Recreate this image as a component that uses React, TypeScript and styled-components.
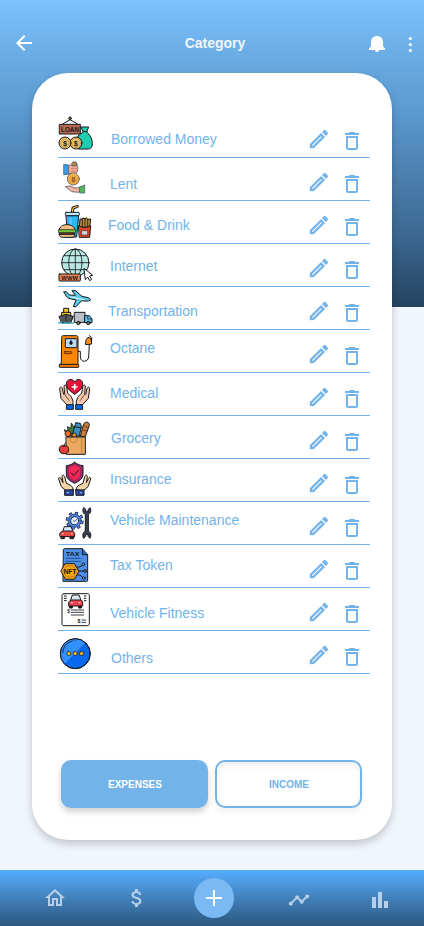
import React from 'react';
import styled, { createGlobalStyle } from 'styled-components';

const BLUE = '#72b3ea';
const INK = '#16181d';

const GlobalStyle = createGlobalStyle`
  * { box-sizing: border-box; }
  body {
    margin: 0;
    background: #f1f6fb;
    font-family: 'Liberation Sans', Arial, sans-serif;
  }
`;

const Screen = styled.div`
  width: 424px;
  height: 926px;
  display: flex;
  flex-direction: column;
  overflow: hidden;
  background: linear-gradient(180deg, #7cc2ff 0px, #69aae2 60px, #5b98cd 115px, #3c6892 235px, #25435f 307px) 0 0 / 100% 307px no-repeat, #f1f6fb;
`;

const Header = styled.header`
  height: 73px;
  padding: 31px 8px 0 12px;
  display: grid;
  grid-template-columns: 80px 1fr 50px;
  align-items: start;
  color: #fff;
`;

const Title = styled.h1`
  margin: 4px 28px 0 0;
  font-size: 14px;
  line-height: 16px;
  font-weight: 700;
  color: #f1f6fb;
  text-align: center;
`;

const HeaderActions = styled.div`
  display: flex;
  justify-content: space-between;
  padding: 4px 0 0 2px;
`;

const Card = styled.main`
  width: 360px;
  height: 767px;
  margin: 0 auto;
  padding: 42px 22px 32px 26px;
  display: flex;
  flex-direction: column;
  background: #fff;
  border-radius: 36px;
  box-shadow: 0 4px 8px rgba(0, 0, 0, 0.2);
`;

const List = styled.ul`
  margin: 0;
  padding: 0;
  list-style: none;
`;

const Row = styled.li`
  height: 43px;
  display: grid;
  grid-template-columns: 36px 1fr 24px 24px;
  column-gap: 9px;
  padding-right: 6px;
  border-bottom: 1px solid ${BLUE};
  color: ${BLUE};
`;

const Label = styled.span<{ $x: number; $mid: number }>`
  padding-top: ${(p) => p.$mid - 8}px;
  padding-left: ${(p) => p.$x - 103}px;
  font-size: 14px;
  line-height: 16px;
  white-space: nowrap;
`;

const IconButton = styled.button<{ $top?: number }>`
  width: 24px;
  height: 24px;
  margin: ${(p) => p.$top ?? 0}px 0 0;
  padding: 0;
  border: 0;
  background: none;
  color: inherit;
  display: flex;
  align-items: center;
  justify-content: center;
`;

const Tabs = styled.div`
  display: grid;
  grid-template-columns: 147px 147px;
  gap: 7px;
  margin: auto 0 0 3px;
`;

const Tab = styled.button<{ $active?: boolean }>`
  height: 48px;
  padding: 0 0 0 1px;
  border: 2px solid ${BLUE};
  border-radius: 10px;
  background: ${(p) => (p.$active ? BLUE : 'transparent')};
  color: ${(p) => (p.$active ? '#fff' : BLUE)};
  font: 700 10px 'Liberation Sans', Arial, sans-serif;
  box-shadow: ${(p) =>
    p.$active
      ? '0 4px 6px rgba(0, 0, 0, 0.18)'
      : '0 4px 6px rgba(0, 0, 0, 0.06), inset 0 4px 6px rgba(0, 0, 0, 0.06)'};
`;

const Nav = styled.nav`
  height: 56px;
  margin-top: auto;
  display: flex;
  align-items: center;
  background: linear-gradient(180deg, #55aeff 0%, #417fb8 52%, #2b5780 100%);
  color: #b5d0e8;
`;

const NavItem = styled.button<{ $gap: number; $drop?: number }>`
  width: 24px;
  height: 24px;
  padding: 0;
  border: 0;
  background: none;
  color: inherit;
  display: flex;
  align-items: center;
  justify-content: center;
  margin-left: ${(p) => p.$gap}px;
  margin-top: ${(p) => (p.$drop ?? 0) * 2}px;
`;

const AddButton = styled(NavItem)`
  width: 40px;
  height: 40px;
  border-radius: 50%;
  background: #7ab9f2;
  color: #fff;
`;

const Glyph = ({ d, size = 24, weight = 0 }: { d: string; size?: number; weight?: number }) => (
  <svg width={size} height={size} viewBox="0 0 24 24" fill="currentColor" stroke={weight ? 'currentColor' : 'none'} strokeWidth={weight} style={{ flex: 'none' }} aria-hidden>
    <path d={d} />
  </svg>
);

const PATHS = {
  back: 'M20 11H7.83l5.59-5.59L12 4l-8 8 8 8 1.41-1.41L7.83 13H20v-2z',
  edit: 'M14.06 9.02l.92.92L5.92 19H5v-.92l9.06-9.06M17.66 3c-.25 0-.51.1-.7.29l-1.83 1.83 3.75 3.75 1.83-1.83c.39-.39.39-1.02 0-1.41l-2.34-2.34c-.2-.2-.45-.29-.71-.29zm-3.6 3.19L3 17.25V21h3.75L17.81 9.94l-3.75-3.75z',
  trash: 'M16 9v10H8V9h8m-1.5-6h-5l-1 1H5v2h14V4h-3.5l-1-1zM18 7H6v12c0 1.1.9 2 2 2h8c1.1 0 2-.9 2-2V7z',
  home: 'M12 5.69l5 4.5V18h-2v-6H9v6H7v-7.81l5-4.5M12 3L2 12h3v8h6v-6h2v6h6v-8h3L12 3z',
  money: 'M11.8 10.9c-2.27-.59-3-1.2-3-2.15 0-1.09 1.01-1.85 2.7-1.85 1.78 0 2.44.85 2.5 2.1h2.21c-.07-1.72-1.12-3.3-3.21-3.81V3h-3v2.16c-1.94.42-3.5 1.68-3.5 3.61 0 2.31 1.91 3.46 4.7 4.13 2.5.6 3 1.48 3 2.41 0 .69-.49 1.79-2.7 1.79-2.06 0-2.87-.92-2.98-2.1h-2.2c.12 2.19 1.76 3.42 3.68 3.83V21h3v-2.15c1.95-.37 3.5-1.5 3.5-3.55 0-2.84-2.43-3.81-4.7-4.4z',
  timeline: 'M23 8c0 1.1-.9 2-2 2-.18 0-.35-.02-.51-.07l-3.56 3.55c.05.16.07.34.07.52 0 1.1-.9 2-2 2s-2-.9-2-2c0-.18.02-.36.07-.52l-2.55-2.55c-.16.05-.34.07-.52.07s-.36-.02-.52-.07l-4.55 4.56c.05.16.07.33.07.51 0 1.1-.9 2-2 2s-2-.9-2-2 .9-2 2-2c.18 0 .35.02.51.07l4.56-4.55C8.02 9.36 8 9.18 8 9c0-1.1.9-2 2-2s2 .9 2 2c0 .18-.02.36-.07.52l2.55 2.55c.16-.05.34-.07.52-.07s.36.02.52.07l3.55-3.56C19.02 8.35 19 8.18 19 8c0-1.1.9-2 2-2s2 .9 2 2z',
  bars: 'M4 9h4v11H4zM10 4h4v16h-4zM16 13h4v7h-4z',
  add: 'M11 4h2v7h7v2h-7v7h-2v-7H4v-2h7z',
};

/* Category drawings share a 108 x 126 grid, shown at 36 x 42. */
const Art = ({ top, children }: { top: number; children: React.ReactNode }) => (
  <svg width="36" height="42" viewBox={`24 ${top} 108 126`} fill="none" stroke={INK} strokeWidth="3" strokeLinejoin="round" strokeLinecap="round" aria-hidden>
    {children}
  </svg>
);

const ArtText = styled.text.attrs({ lengthAdjust: 'spacingAndGlyphs' })`
  font-family: 'Liberation Sans', Arial, sans-serif;
  font-weight: 700;
  text-anchor: middle;
  stroke: none;
`;

const Loan = () => (
  <Art top={9}>
    <path d="M38 36L60 23l22 13" />
    <circle cx="60" cy="19" r="4" fill="#a87a3c" />
    <path d="M94 45h22l-6 15c10 8 17 20 17 35 0 12-6 16-13 16H84V72l15-12z" fill="#1fcdb0" />
    <path d="M99 59h12" />
    <rect x="29" y="37" width="62" height="29" fill="#b5674f" />
    <ArtText x="60" y="59" fontSize="21" fill={INK} textLength="54">LOAN</ArtText>
    <circle cx="78" cy="93" r="18" fill="#edc267" />
    <circle cx="45" cy="93" r="18" fill="#edc267" />
    <circle cx="78" cy="93" r="13" stroke="#a97a34" strokeWidth="1.5" />
    <circle cx="45" cy="93" r="13" stroke="#a97a34" strokeWidth="1.5" />
    <ArtText x="45" y="101" fontSize="22" fill={INK}>$</ArtText>
    <ArtText x="77" y="101" fontSize="22" fill={INK}>$</ArtText>
  </Art>
);

const Lent = () => (
  <Art top={138}>
    <g stroke="#45516b" strokeWidth="2.2">
      <circle cx="73" cy="157" r="8" fill="#b9873f" />
      <path d="M54 161c6-4 10-2 13 1l15-1c3 6 2 16-4 24H54z" fill="#f2ae91" />
      <path d="M64 170h16M64 178h14" stroke="#b9776a" />
      <path d="M42 157l13 2v28l-13 1z" fill="#3c9eea" />
      <circle cx="70" cy="201" r="18" fill="#eda73d" />
      <path d="M59 193c4-9 18-10 23 0" stroke="#ffd584" />
      <path d="M47 224c12-4 18-2 24 3l13 1 7-4v14l-8 3-17-2z" fill="#f3b49b" />
      <path d="M90 225l14-6v24H90z" fill="#52ba59" />
    </g>
    <ArtText x="70" y="209" fontSize="20" fill="#794f2c">8</ArtText>
  </Art>
);

const Food = () => (
  <Art top={3}>
    <path d="M67 38l2-14 13-5" stroke={INK} strokeWidth="9" />
    <path d="M67 38l2-14 13-5" stroke="#f4b53c" strokeWidth="4" />
    <path d="M49 47h37l-6 64H54z" fill="#26b9f4" />
    <path d="M62 54l2 48" stroke="#7bdfff" />
    <rect x="46" y="37" width="42" height="10" rx="3" fill="#bce9fa" />
    <path d="M88 80l2-23h7l2-3 6 2 4-3 4 5 9-1-3 24z" fill="#b78a3c" />
    <path d="M97 58v22M105 57v23M113 58v22" strokeWidth="2.5" />
    <path d="M86 77c10 7 24 7 36 0l-3 35H89z" fill="#e34428" />
    <rect x="95" y="92" width="18" height="13" fill="#cbd7de" strokeWidth="1.5" />
    <path d="M27 91c2-11 11-17 24-17s23 6 25 17z" fill="#efb67a" />
    <path d="M28 98h46l-3 6H31z" fill="#9f3e24" />
    <path d="M28 103h47c-1 7-4 9-9 9H37c-5 0-8-2-9-9z" fill="#f2bd82" />
    <rect x="25" y="89" width="52" height="9" rx="3" fill="#71c63a" strokeWidth="2" />
    <path d="M39 82h1M49 80h1M60 83h1" stroke="#fff0d1" />
  </Art>
);

const Internet = () => (
  <Art top={132}>
    <circle cx="76" cy="188" r="41" fill="#b8e9e2" />
    <ellipse cx="76" cy="188" rx="20" ry="41" strokeWidth="2.5" />
    <path d="M76 147v82M35 188h82M42 167h68M42 209h68" strokeWidth="2.5" />
    <rect x="27" y="222" width="64" height="21" rx="2" fill="#ef8553" />
    <ArtText x="59" y="239" fontSize="18" fill={INK} textLength="50">WWW</ArtText>
    <path d="M102 206l4 33 7-8 6 11 6-4-6-10 8-2z" fill="#fff" />
  </Art>
);

const Transportation = () => (
  <Art top={3}>
    <path d="M42 18l7-1 9 10 18 1-10-14h10l20 17 18 4c6 2 9 6 7 8-5 3-16 3-26 1L78 62h-8l8-20-22-5c-6-2-10-12-14-19z" fill="#5ac8e9" />
    <path d="M62 33l40 8" stroke="#e9f7ff" strokeWidth="3" />
    <path d="M41 80V67h15v13M35 93V79h27v14" fill="#f3ca28" />
    <path d="M28 91l20-6 22 6-8 20H36z" fill="#56585c" />
    <path d="M48 88v18" stroke="#222" />
    <path d="M26 111c7-5 9 4 16 0s9 3 15 0 7 3 14 0" stroke="#34a9c7" strokeWidth="4" />
    <rect x="74" y="79" width="31" height="30" fill="#b9bfc7" />
    <path d="M105 89h13l8 10v11h-21z" fill="#57bce4" />
    <path d="M113 91v8h12" strokeWidth="2" />
    <circle cx="85" cy="111" r="5" fill="#777" />
    <circle cx="115" cy="111" r="5" fill="#777" />
  </Art>
);

const Octane = () => (
  <Art top={132}>
    <path d="M35 153c0-3 2-4 5-4h39c3 0 5 2 5 5v82H35z" fill="#ff8500" />
    <rect x="28" y="235" width="58" height="9" rx="2" fill="#ff7900" />
    <rect x="46" y="158" width="35" height="27" rx="2" fill="#b9dafa" />
    <path d="M63 163c-8 9-4 13 0 13s8-4 0-13z" fill={INK} strokeWidth="1" />
    <rect x="43" y="197" width="22" height="6" rx="2" fill="#f26d00" strokeWidth="2" />
    <path d="M84 196h7v17c0 17 23 17 25 0l2-38" />
    <path d="M108 162l6-8 9 3 2 17-17 2z" fill="#ff8d13" />
    <path d="M118 149l7 6v10" />
  </Art>
);

const hand = 'M51 99l-18-20-4-28c0-7 6-8 8-1l4 17 3-2-2-20c-1-7 6-8 8-1l3 20c8 5 14 14 16 24v11z';

const Medical = () => (
  <Art top={3}>
    <path d={hand} fill="#f7c5a9" />
    <path d={hand} fill="#f7c5a9" transform="translate(148 0) scale(-1 1)" />
    <path d="M44 67l13 18M104 67L91 85" strokeWidth="2" />
    <path d="M51 98h19v14H50zM78 98h19l1 14H78z" fill="#0866ed" />
    <path d="M74 67C58 56 49 47 49 36c0-15 18-18 25-6 7-12 24-9 24 6 0 11-8 20-24 31z" fill="#df1637" />
    <path d="M74 38v14M67 45h14" stroke="#fff" strokeWidth="5" />
  </Art>
);

const Grocery = () => (
  <Art top={132}>
    <path d="M50 191l-7-18 12 6-3-15 10 5 2-16 10 15 1 24z" fill="#437d36" strokeWidth="2.5" />
    <path d="M66 190l8-26 3-12 14 2 3 9-6 29z" fill="#3b90c1" />
    <path d="M74 164l20 4" />
    <path d="M91 192l9-33c3-12 19-11 18 1l-12 33z" fill="#cc7d35" />
    <path d="M104 163l8 3M101 174l8 3" strokeWidth="2" />
    <circle cx="54" cy="185" r="9" fill="#ef6d24" strokeWidth="2.5" />
    <circle cx="73" cy="190" r="7" fill="#e8942c" strokeWidth="2.5" />
    <path d="M49 195h57v52H50z" fill="#ecaa61" />
    <path d="M95 196v50" stroke="#c07b3d" />
    <path d="M61 197v8c0 9 20 9 20 0v-8" stroke="#b36e34" strokeWidth="2" />
    <path d="M42 222c-8-4-15 1-14 12 1 8 7 12 14 11 8 1 14-3 14-12 0-9-7-15-14-11z" fill="#e43f38" />
    <path d="M42 221c0-5 2-7 5-8" />
  </Art>
);

const Insurance = () => (
  <Art top={3}>
    <path d="M46 96L34 86l-8-23c-1-6 5-6 7-1l6 12-3-18c0-6 6-6 8 0l5 20 11 5c7 4 10 9 10 17z" fill="#f4d5a4" />
    <path d="M102 96l12-10 8-23c1-6-5-6-7-1l-6 12 3-18c0-6-6-6-8 0l-5 20-11 5c-7 4-10 9-10 17z" fill="#f4d5a4" />
    <path d="M45 96l25-1v17H45zM78 95l24 1v16H79z" fill="#2a459f" />
    <path d="M52 104h4M91 104h4" stroke="#a8c3ff" />
    <path d="M74 13c8 6 15 9 25 10v26c0 13-11 20-25 27-15-7-25-14-25-27V23c10-1 17-4 25-10z" fill="#8b316f" />
    <path d="M74 21l18 8v20c0 9-7 14-18 19-12-5-18-10-18-19V29z" fill="#f42856" stroke="#ad204e" />
    <path d="M64 45l7 8 15-17" />
  </Art>
);

const Maintenance = () => (
  <Art top={132}>
    <circle cx="74" cy="188" r="22" stroke={INK} strokeWidth="10" strokeDasharray="9 8.280" strokeLinecap="butt" />
    <circle cx="74" cy="188" r="20" fill="#4a80ea" strokeWidth="2" />
    <circle cx="74" cy="188" r="22" stroke="#4a80ea" strokeWidth="6" strokeDasharray="6 11.280" strokeDashoffset="-1.500" strokeLinecap="butt" />
    <circle cx="74" cy="188" r="12" fill="#e3f3ff" strokeWidth="2.500" />
    <path d="M70 186l4 5 7-8" strokeWidth="2" />
    <path d="M101 149c-5 9-2 17 5 21v49c-7 4-10 13-5 22l6-6v-6h7v6l6 6c5-9 2-18-5-22v-49c7-4 10-12 5-21l-6 6v6h-7v-6z" fill="#3a4153" />
    <path d="M38 220l5-14h20l6 14" fill="#dceaff" />
    <path d="M34 234h9v8h-9zM61 234h10v8H61z" fill="#32343b" />
    <path d="M30 225l8-6h29l7 6v11H31z" fill="#ea4747" />
    <path d="M37 227h3M64 227h3" stroke="#ffe1a3" />
  </Art>
);

const TaxToken = () => (
  <Art top={3}>
    <path d="M40 17c0-2 1-3 4-3h53l16 18v77c0 2-1 3-3 3H40z" fill="#4c8fe5" />
    <path d="M97 15v17h16" fill="#2869c0" />
    <ArtText x="68" y="35" fontSize="18" fill={INK} textLength="40">TAX</ArtText>
    <path d="M48 43h43M48 52h43" stroke="#204e94" />
    <path d="M86 81h15M81 93h9l8 8M81 69h9l7-7" />
    <circle cx="100" cy="61" r="4" fill="#65a9ff" />
    <circle cx="105" cy="81" r="4" fill="#65a9ff" />
    <circle cx="101" cy="102" r="4" fill="#65a9ff" />
    <path d="M46 59h27l14 23-14 24H46L33 82z" fill="#f8a51b" />
    <path d="M50 66h20l9 16-9 17H50l-10-17z" stroke="#a76b12" strokeWidth="2" />
    <ArtText x="60" y="89" fontSize="19" fill={INK} textLength="38">NFT</ArtText>
  </Art>
);

const Fitness = () => (
  <Art top={132}>
    <path d="M42 149h70c4 0 6 2 6 6v84c0 4-2 6-6 6H42c-4 0-6-2-6-6v-84c0-4 2-6 6-6z" fill="#fff" />
    <path d="M43 156h6M43 163h6M43 170h6M103 156h5M103 163h5M103 170h5" />
    <path d="M61 171l6-18h20l7 18" fill="#d8e8f1" />
    <path d="M60 185h7v7h-7zM87 185h7v7h-7z" fill={INK} />
    <path d="M57 173l6-5h29l6 5v13H57z" fill="#ed414d" />
    <path d="M64 176h3M87 176h3" stroke="#fff" />
    <path d="M64 198h37M64 205h37M64 213h37M96 228h11M96 235h11" strokeWidth="2.500" />
    <ArtText x="56" y="206" fontSize="14" fill={INK}>$</ArtText>
    <ArtText x="87" y="238" fontSize="16" fill={INK}>$</ArtText>
  </Art>
);

const Others = () => (
  <Art top={3}>
    <circle cx="76" cy="71" r="45" fill="#0869ee" />
    <path d="M44 101A43.5 43.5 0 01105 39z" fill="#348fff" stroke="none" />
    <circle cx="76" cy="71" r="45" />
    <path d="M38 69c1-18 12-32 29-36M75 31h1" strokeWidth="2.500" />
    <g fill="#ffc21b" strokeWidth="2">
      <rect x="51" y="65" width="11" height="11" rx="3" />
      <rect x="70" y="65" width="11" height="11" rx="3" />
      <rect x="89" y="65" width="11" height="11" rx="3" />
    </g>
  </Art>
);

const categories = [
  { name: 'Borrowed Money', art: Loan, x: 111, mid: 24 },
  { name: 'Lent', art: Lent, x: 110, mid: 26 },
  { name: 'Food & Drink', art: Food, x: 108, mid: 24 },
  { name: 'Internet', art: Internet, x: 110, mid: 22 },
  { name: 'Transportation', art: Transportation, x: 108, mid: 24 },
  { name: 'Octane', art: Octane, x: 110, mid: 18 },
  { name: 'Medical', art: Medical, x: 110, mid: 20 },
  { name: 'Grocery', art: Grocery, x: 111, mid: 22 },
  { name: 'Insurance', art: Insurance, x: 110, mid: 20 },
  { name: 'Vehicle Maintenance', art: Maintenance, x: 110, mid: 18 },
  { name: 'Tax Token', art: TaxToken, x: 110, mid: 20 },
  { name: 'Vehicle Fitness', art: Fitness, x: 110, mid: 25 },
  { name: 'Others', art: Others, x: 111, mid: 27 },
];

export default function App() {
  return (
    <>
      <GlobalStyle />
      <Screen>
        <Header>
          <IconButton aria-label="Back"><Glyph d={PATHS.back} /></IconButton>
          <Title>Category</Title>
          <HeaderActions>
            <svg width="18" height="18" viewBox="0 0 18 18" fill="currentColor" aria-hidden>
              <path d="M9 1C5.500 1 3 3.400 3 7v4.200L1 13.600V15h5.800c.2 1.300 1 2 2.200 2s2-.7 2.200-2H17v-1.400l-2-2.400V7c0-3.600-2.500-6-6-6z" />
            </svg>
            <svg width="12" height="20" viewBox="0 0 12 20" fill="currentColor" aria-hidden>
              <circle cx="6.400" cy="3.500" r="1.600" />
              <circle cx="6.400" cy="9.500" r="1.600" />
              <circle cx="6.400" cy="15.500" r="1.600" />
            </svg>
          </HeaderActions>
        </Header>
        <Card>
          <List>
            {categories.map(({ name, art: Picture, x, mid }) => (
              <Row key={name}>
                <Picture />
                <Label $x={x} $mid={mid}>{name}</Label>
                <IconButton $top={12} aria-label="Edit"><Glyph d={PATHS.edit} weight={0.35} /></IconButton>
                <IconButton $top={14} aria-label="Delete"><Glyph d={PATHS.trash} /></IconButton>
              </Row>
            ))}
          </List>
          <Tabs>
            <Tab $active>EXPENSES</Tab>
            <Tab>INCOME</Tab>
          </Tabs>
        </Card>
        <Nav>
          <NavItem $gap={43} aria-label="Home"><Glyph d={PATHS.home} /></NavItem>
          <NavItem $gap={58} aria-label="Money"><Glyph d={PATHS.money} /></NavItem>
          <AddButton $gap={45} aria-label="Add"><Glyph d={PATHS.add} /></AddButton>
          <NavItem $gap={53} $drop={2} aria-label="Trends"><Glyph d={PATHS.timeline} size={22} weight={0.3} /></NavItem>
          <NavItem $gap={57} $drop={2} aria-label="Reports"><Glyph d={PATHS.bars} /></NavItem>
        </Nav>
      </Screen>
    </>
  );
}
